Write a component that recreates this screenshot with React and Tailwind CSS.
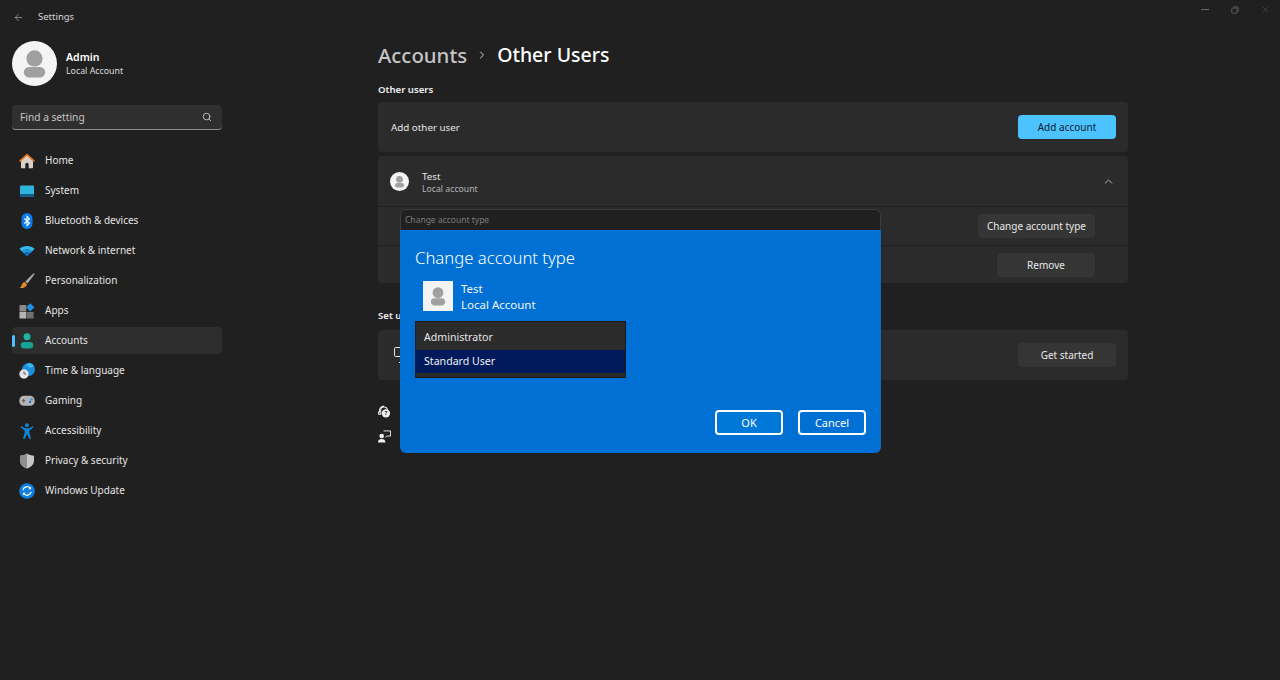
import { ChevronRight, ChevronUp, Search, ArrowLeft, X } from "lucide-react";

const font = "font-['Noto_Sans',sans-serif]";

function HomeIcon() {
  return (
    <svg viewBox="0 0 16 16" className="w-4 h-4">
      <path d="M8 2 2 7.500v7.100a.6.6 0 0 0 .6.6h3.700v-3.700a1.700 1.700 0 0 1 3.400 0v3.700h3.700a.6.6 0 0 0 .6-.6V7.500z" fill="#d9d0c8" />
      <path d="M8 .4 0 7.800l1.100 1.200L8 2.700l6.900 6.300L16 7.800z" fill="#e3791d" />
    </svg>
  );
}

function SystemIcon() {
  return (
    <svg viewBox="0 0 16 16" className="w-4 h-4">
      <rect x="1" y="2.500" width="14" height="11" rx="1" fill="#2fb4dc" />
      <rect x="1" y="11" width="14" height="2.500" rx="0.600" fill="#0e5f8c" />
    </svg>
  );
}

function BluetoothIcon() {
  return (
    <svg viewBox="0 0 16 16" className="w-4 h-4">
      <rect x="2.500" y="0" width="11" height="16" rx="5.500" fill="#0a7be8" />
      <path d="M5.300 5.500 10.500 10 8 12.600V3.400L10.500 6 5.300 10.500" fill="none" stroke="#fff" strokeWidth="1.100" />
    </svg>
  );
}

function WifiIcon() {
  return (
    <svg viewBox="0 0 16 16" className="w-4 h-4">
      <path d="M.4 5.800C4.600 2.100 11.400 2.100 15.600 5.800L13 8.400C10.200 5.900 5.800 5.900 3 8.400z" fill="#36b9ee" />
      <path d="M3 8.400C5.800 5.900 10.200 5.900 13 8.400L11 10.400C9.200 8.900 6.800 8.900 5 10.400z" fill="#1c9be0" />
      <path d="M5 10.400C6.800 8.900 9.200 8.900 11 10.400L8 13.600z" fill="#0b6fc4" />
    </svg>
  );
}

function BrushIcon() {
  return (
    <svg viewBox="0 0 16 16" className="w-4 h-4">
      <path d="M14.600.2 15.700 1.100 8.500 10.500 6.200 8.400z" fill="#a9a9a9" />
      <path d="M5.600 9 8 11.200C7.400 14 4.400 15.500.4 15 2.500 14.200 2.500 12.500 3.100 11.100 3.600 10 4.500 9.200 5.600 9z" fill="#e8862a" />
    </svg>
  );
}

function AppsIcon() {
  return (
    <svg viewBox="0 0 16 16" className="w-4 h-4">
      <rect x="0.500" y="2" width="6.800" height="6.500" fill="#8a8a8a" />
      <rect x="0.500" y="9" width="6.800" height="6.500" fill="#b5b5b5" />
      <rect x="7.800" y="9" width="6.800" height="6.500" fill="#707070" />
      <path d="M11.200 .2 15.400 4.300 11.200 8.400 7.200 4.300z" fill="#1e90e6" />
    </svg>
  );
}

function AccountsIcon() {
  return (
    <svg viewBox="0 0 16 16" className="w-4 h-4">
      <circle cx="8" cy="3.800" r="3.500" fill="#1fb5a6" />
      <rect x="1.800" y="9" width="12.400" height="6.500" rx="3.200" fill="#14a596" />
    </svg>
  );
}

function TimeIcon() {
  return (
    <svg viewBox="0 0 16 16" className="w-4 h-4">
      <circle cx="9.500" cy="6.500" r="6.500" fill="#1c8fdc" />
      <path d="M9.500 0a6.500 6.500 0 0 1 5.600 3.200L11 5 7.500 2.500z" fill="#39b7ec" />
      <circle cx="5" cy="11" r="4.700" fill="#e3e3e3" />
      <path d="M5 8.300V11h2.200" fill="none" stroke="#555" strokeWidth="0.900" />
    </svg>
  );
}

function GamingIcon() {
  return (
    <svg viewBox="0 0 16 16" className="w-4 h-4">
      <rect x="0.300" y="2.800" width="15.400" height="10" rx="4.600" fill="#b4b4b4" />
      <path d="M2.800 7.800h3.600M4.600 6v3.600" stroke="#5b5b5b" strokeWidth="1" />
      <circle cx="11" cy="9" r="1.200" fill="#1a73d0" />
      <circle cx="12.600" cy="6.400" r="1.200" fill="#2b8fe2" />
    </svg>
  );
}

function AccessibilityIcon() {
  return (
    <svg viewBox="0 0 16 16" className="w-4 h-4">
      <circle cx="8" cy="2.200" r="1.900" fill="#0f87dc" />
      <path d="M1.500 4.300 2.300 3.200 6 5.300H10L13.700 3.200 14.500 4.300 10.300 7.500V10L12 15.400 10.500 15.900 8 11 5.500 15.900 4 15.400 5.700 10V7.500z" fill="#0f87dc" />
    </svg>
  );
}

function ShieldIcon() {
  return (
    <svg viewBox="0 0 16 16" className="w-4 h-4">
      <path d="M8 .6C10 2 12.400 2.600 15 2.800V7.500C15 11.500 12 14.300 8 15.600 4 14.300 1 11.500 1 7.500V2.800C3.600 2.600 6 2 8 .6z" fill="#c6c6c6" />
      <path d="M8 .6V15.600C4 14.300 1 11.500 1 7.500V2.800C3.600 2.600 6 2 8 .6z" fill="#8e8e8e" />
    </svg>
  );
}

function UpdateIcon() {
  return (
    <svg viewBox="0 0 16 16" className="w-4 h-4">
      <circle cx="8" cy="8" r="7.800" fill="#0f80e0" />
      <path d="M3.900 7.200A4.200 4.200 0 0 1 11.300 5.300M12.100 8.800A4.200 4.200 0 0 1 4.700 10.700" fill="none" stroke="#fff" strokeWidth="1.200" />
      <path d="M12.100 3.400V6.200H9.300zM3.900 12.600V9.800H6.700z" fill="#fff" />
    </svg>
  );
}

function Person({ size, circle, bg }) {
  return (
    <svg viewBox="0 0 40 40" style={{ width: size, height: size }}>
      {circle && <circle cx="20" cy="20" r="20" fill={bg} />}
      <circle cx="20" cy="15.500" r="7.200" fill="#a0a0a0" />
      <rect x="10.500" y="23" width="19" height="9.500" rx="4.700" fill="#a0a0a0" />
    </svg>
  );
}

const navItems = [
  { label: "Home", icon: HomeIcon },
  { label: "System", icon: SystemIcon },
  { label: "Bluetooth & devices", icon: BluetoothIcon },
  { label: "Network & internet", icon: WifiIcon },
  { label: "Personalization", icon: BrushIcon },
  { label: "Apps", icon: AppsIcon },
  { label: "Accounts", icon: AccountsIcon, active: true },
  { label: "Time & language", icon: TimeIcon },
  { label: "Gaming", icon: GamingIcon },
  { label: "Accessibility", icon: AccessibilityIcon },
  { label: "Privacy & security", icon: ShieldIcon },
  { label: "Windows Update", icon: UpdateIcon },
];

function Sidebar() {
  return (
    <aside className="w-[234px] shrink-0 px-3">
      <div className="flex items-center h-[34px] pl-px">
        <ArrowLeft size={11} strokeWidth={1.200} className="text-[#d0d0d0]" />
        <span className="ml-[14px] text-[9.500px] text-[#d8d8d8]">Settings</span>
      </div>
      <div className="flex items-center mt-[7px]">
        <Person size={45} circle bg="#f4f4f4" />
        <div className="ml-[9px]">
          <div className="text-[10.500px] leading-[15px] pt-px font-semibold text-white">Admin</div>
          <div className="text-[8.800px] leading-[13px] text-[#dcdcdc]">Local Account</div>
        </div>
      </div>
      <div className="flex items-center justify-between mt-[19px] h-[25px] pl-2 pr-[10px] rounded-[4px] bg-[#2f2f2f] border-b border-[#8c8c8c]">
        <span className="text-[10.200px] pt-px text-[#c6c6c6]">Find a setting</span>
        <Search size={10} className="text-[#d0d0d0]" />
      </div>
      <nav className="flex flex-col gap-[3px] mt-[17px]">
        {navItems.map(({ label, icon: Icon, active }) => (
          <div key={label} className={`relative flex items-center h-[27px] pl-[7px] rounded-[4px] ${active ? "bg-[#2d2d2d]" : ""}`}>
            {active && <span className="absolute left-0 top-2 w-[3px] h-3 rounded-full bg-[#4cc2ff]" />}
            <Icon />
            <span className="ml-[10px] text-[10px] text-[#e4e4e4]">{label}</span>
          </div>
        ))}
      </nav>
    </aside>
  );
}

function Card({ children, className = "" }) {
  return <div className={`flex items-center justify-between bg-[#2b2b2b] rounded-[4px] pl-[13px] ${className}`}>{children}</div>;
}

function Btn({ children, className = "" }) {
  return (
    <div className={`flex items-center justify-center h-6 rounded-[4px] bg-[#353535] text-[10px] text-[#e8e8e8] ${className}`}>
      {children}
    </div>
  );
}

function Main() {
  return (
    <main className="w-[750px] ml-[144px] relative">
      <div className="flex items-center h-[44px] mt-[33px] leading-none">
        <span className="text-[20.400px] font-medium text-[#c4c4c4]">Accounts</span>
        <ChevronRight size={12} className="mx-[9px] text-[#d0d0d0]" />
        <span className="text-[19.500px] font-medium text-white">Other Users</span>
      </div>
      <div className="text-[9.600px] font-semibold text-[#f0f0f0] mt-[6px] h-[13px] leading-[14px]">Other users</div>
      <Card className="h-[50px] mt-[6px] pr-3">
        <span className="text-[9.800px] pt-[2px] text-[#e6e6e6]">Add other user</span>
        <div className="flex items-center justify-center w-[98px] h-6 rounded-[4px] bg-[#4cc2ff] text-[10px] text-[#10202c]">Add account</div>
      </Card>
      <div className="mt-1 rounded-[4px] overflow-hidden flex flex-col gap-px">
        <div className="flex items-center justify-between h-[50px] bg-[#2b2b2b] pl-3 pr-[13px]">
          <div className="flex items-center">
            <Person size={19} circle bg="#f4f4f4" />
            <div className="ml-[13px] pt-[3px]">
              <div className="text-[9.800px] leading-[13px] text-[#e6e6e6]">Test</div>
              <div className="text-[8.700px] leading-[13px] text-[#b4b4b4]">Local account</div>
            </div>
          </div>
          <ChevronUp size={13} strokeWidth={1.500} className="text-[#d0d0d0]" />
        </div>
        <div className="flex items-center justify-end h-[38px] bg-[#2b2b2b] pr-[33px]">
          <Btn className="w-[117px]">Change account type</Btn>
        </div>
        <div className="flex items-center justify-end h-[37px] bg-[#2b2b2b] pr-[33px]">
          <Btn className="w-[98px] mt-px">Remove</Btn>
        </div>
      </div>
      <div className="text-[9.600px] font-semibold text-[#f0f0f0] mt-[26px] h-[14px] leading-[14px]">Set up a kiosk</div>
      <Card className="h-[50px] mt-[7px] pr-3">
        <svg viewBox="0 0 16 16" className="w-4 h-4 ml-[3px]" fill="none" stroke="#e8e8e8" strokeWidth="1">
          <rect x="0.500" y="0.500" width="15" height="9" rx="1" />
          <path d="M8 9.500v6M5 15.500h6" />
        </svg>
        <Btn className="w-[98px]">Get started</Btn>
      </Card>
      <div className="flex items-center h-[14px] mt-[24px]">
        <svg viewBox="0 0 14 14" className="w-[13px] h-[13px]">
          <path d="M6.500 1a5 5 0 0 0-4.900 5v1.500H.6V10h2.300V6a3.600 3.600 0 0 1 7.200-.4" fill="none" stroke="#f0f0f0" strokeWidth="1.100" />
          <circle cx="8.500" cy="9" r="4.500" fill="#f0f0f0" />
          <text x="8.500" y="11.300" fontSize="6.500" fontWeight="700" textAnchor="middle" fill="#222">?</text>
        </svg>
      </div>
      <div className="flex items-center h-[14px] mt-[11px]">
        <svg viewBox="0 0 14 14" className="w-[13px] h-[13px]">
          <circle cx="4" cy="6.500" r="2.500" fill="#f0f0f0" />
          <path d="M0 13.500c0-2.500 1.500-3.700 4-3.700s4 1.200 4 3.700z" fill="#f0f0f0" />
          <path d="M6 1h7.500v5.500H9.500L8 8" fill="none" stroke="#f0f0f0" strokeWidth="1" />
        </svg>
      </div>
    </main>
  );
}

function Dialog() {
  return (
    <div className="absolute left-[400px] top-[209px] w-[481px] h-[244px] rounded-[6px] overflow-hidden flex flex-col">
      <div className="h-[21px] shrink-0 bg-[#202020] rounded-t-[6px] border-t border-x border-[#3d3d3d] pl-1 text-[8.500px] leading-[20px] text-[#7c7c7c]">Change account type</div>
      <div className="flex-1 bg-[#0070d4] px-[15px] pt-4 text-white">
        <div className="text-[16.700px] leading-[24px] font-light">Change account type</div>
        <div className="flex items-start mt-[11px] ml-2">
          <div className="w-[30px] h-[30px] bg-[#f4f4f4]">
            <Person size={30} />
          </div>
          <div className="ml-2 text-[11.500px] leading-[16px] text-[#f0f6fc]">
            <div>Test</div>
            <div>Local Account</div>
          </div>
        </div>
        <div className="mt-2 w-[211px] h-[57px] bg-[#2b2b2b] border border-[#1a1a1a]">
          <div className="h-[28px] pl-2 pt-1 flex items-center text-[10.600px] text-[#e6e6e6]">Administrator</div>
          <div className="h-[23px] pl-2 flex items-center bg-[#001a5c] text-[10.600px] text-[#f0f0f0]">Standard User</div>
        </div>
        <div className="flex justify-end gap-[15px] mt-[32px]">
          <div className="w-[68px] h-[25px] pt-px rounded-[4px] border-2 border-white bg-[#0078d7] flex items-center justify-center text-[11px]">OK</div>
          <div className="w-[68px] h-[25px] pt-px rounded-[4px] border-2 border-white flex items-center justify-center text-[11px]">Cancel</div>
        </div>
      </div>
    </div>
  );
}

export default function App() {
  return (
    <div className={`relative w-[1280px] h-[680px] overflow-hidden bg-[#202020] flex ${font}`}>
      <Sidebar />
      <Main />
      <Dialog />
      <div className="absolute top-[5px] right-[10px] flex items-center gap-[22px] text-[#6a6a6a]">
        <div className="w-2 h-px bg-current" />
        <svg viewBox="0 0 10 10" className="w-2 h-2" fill="none" stroke="currentColor" strokeWidth="1">
          <rect x="1" y="2.500" width="6.500" height="6.500" rx="1.300" />
          <path d="M3 1h4.500A1.500 1.500 0 0 1 9 2.500V7" />
        </svg>
        <X size={9} strokeWidth={1.200} />
      </div>
    </div>
  );
}
